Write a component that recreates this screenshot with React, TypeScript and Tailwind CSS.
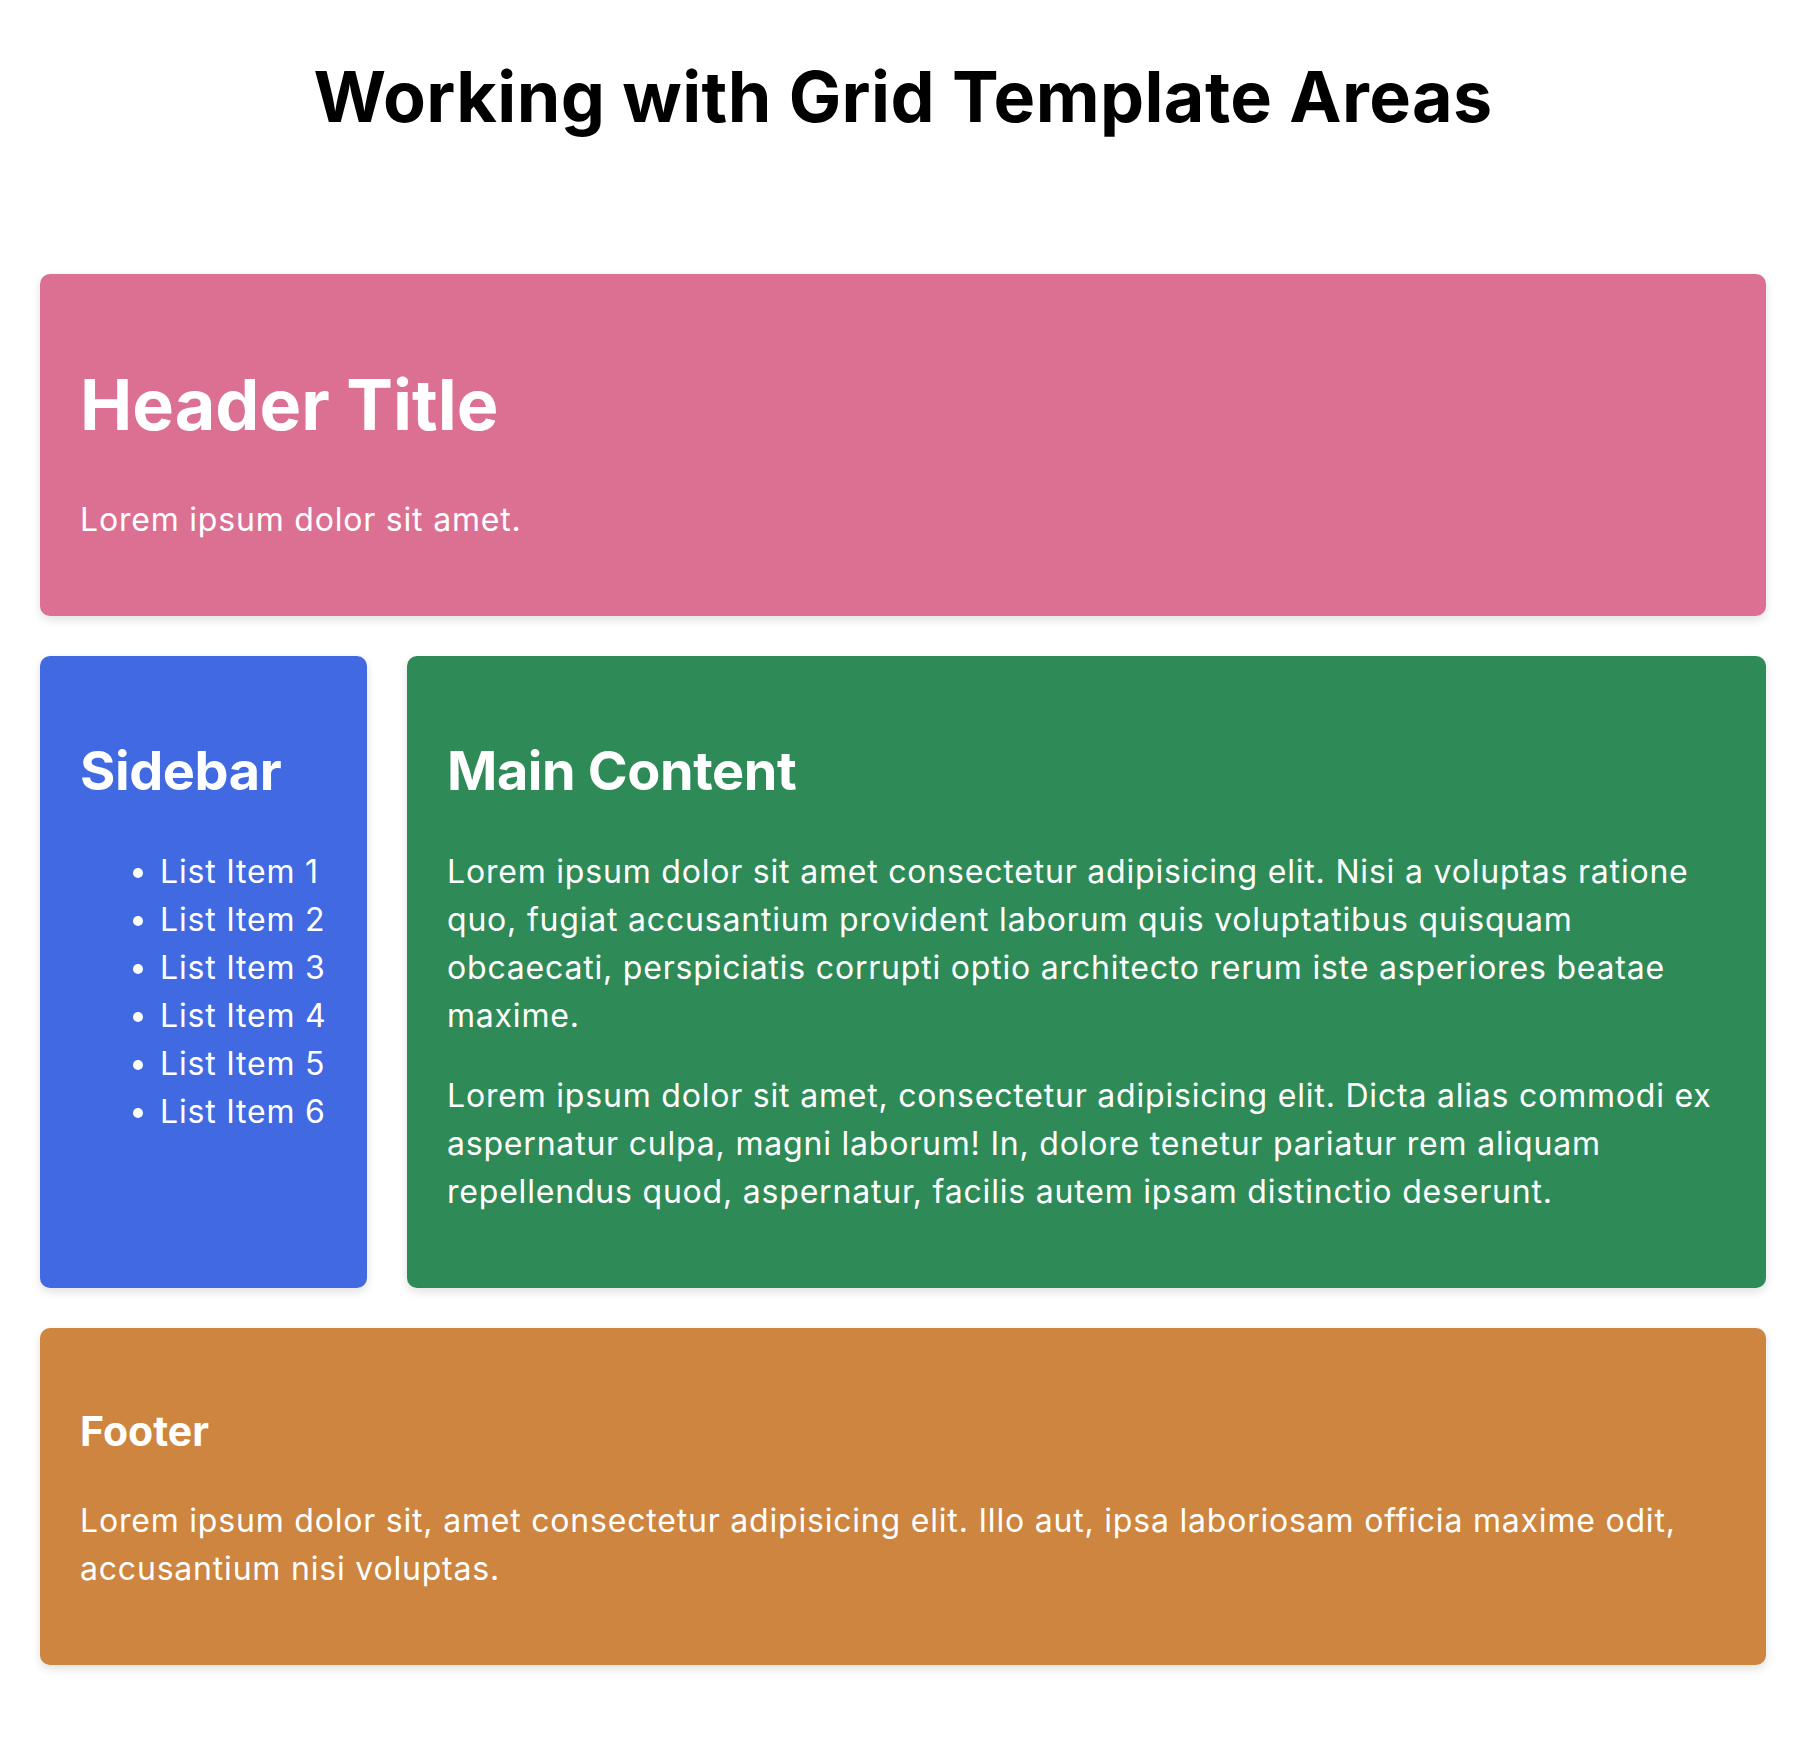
const items = ["List Item 1", "List Item 2", "List Item 3", "List Item 4", "List Item 5", "List Item 6"];

export default function App() {
  return (
    <div className="min-h-[1764px] bg-white px-10 pb-10 font-['Inter',sans-serif] text-black">
      <h1 className="mt-[55px] mb-[135px] text-center text-[70px] font-bold leading-[1.2] tracking-[0.4px]">
        Working with Grid Template Areas
      </h1>

      <div className="grid grid-cols-[327px_1fr] gap-10 text-white">
        <header className="col-span-2 rounded-[10px] bg-[#db7093] p-10 shadow-[0_4px_10px_rgba(0,0,0,0.12)]">
          <h1 className="mt-[49px] mb-[49px] text-[70px] font-bold leading-[1.2]">Header Title</h1>
          <p className="mb-8 text-[32px] leading-[48px] tracking-[0.8px]">Lorem ipsum dolor sit amet.</p>
        </header>

        <aside className="rounded-[10px] bg-[#4169e1] p-10 shadow-[0_4px_10px_rgba(0,0,0,0.12)]">
          <h2 className="mt-[43px] mb-[44px] text-[54px] font-bold leading-[1.2] tracking-[-0.4px]">Sidebar</h2>
          <ul className="list-disc pl-20 text-[32px] leading-[48px] tracking-[0.8px]">
            {items.map((item) => (
              <li key={item} className="whitespace-nowrap">
                {item}
              </li>
            ))}
          </ul>
        </aside>

        <main className="rounded-[10px] bg-[#2e8b57] p-10 shadow-[0_4px_10px_rgba(0,0,0,0.12)]">
          <h2 className="mt-[43px] mb-[44px] text-[54px] font-bold leading-[1.2] tracking-[-0.4px]">Main Content</h2>
          <p className="mb-8 text-[32px] leading-[48px] tracking-[0.8px]">
            Lorem ipsum dolor sit amet consectetur adipisicing elit. Nisi a voluptas ratione quo, fugiat
            accusantium provident laborum quis voluptatibus quisquam obcaecati, perspiciatis corrupti optio
            architecto rerum iste asperiores beatae maxime.
          </p>
          <p className="mb-8 text-[32px] leading-[48px] tracking-[0.8px]">
            Lorem ipsum dolor sit amet, consectetur adipisicing elit. Dicta alias commodi ex aspernatur culpa,
            magni laborum! In, dolore tenetur pariatur rem aliquam repellendus quod, aspernatur, facilis autem
            ipsam distinctio deserunt.
          </p>
        </main>

        <footer className="col-span-2 rounded-[10px] bg-[#cd853f] p-10 shadow-[0_4px_10px_rgba(0,0,0,0.12)]">
          <h3 className="mt-[39px] mb-[41px] text-[41px] font-bold leading-[1.2]">Footer</h3>
          <p className="mb-8 text-[32px] leading-[48px] tracking-[0.8px]">
            Lorem ipsum dolor sit, amet consectetur adipisicing elit. Illo aut, ipsa laboriosam officia maxime
            odit, accusantium nisi voluptas.
          </p>
        </footer>
      </div>
    </div>
  );
}
